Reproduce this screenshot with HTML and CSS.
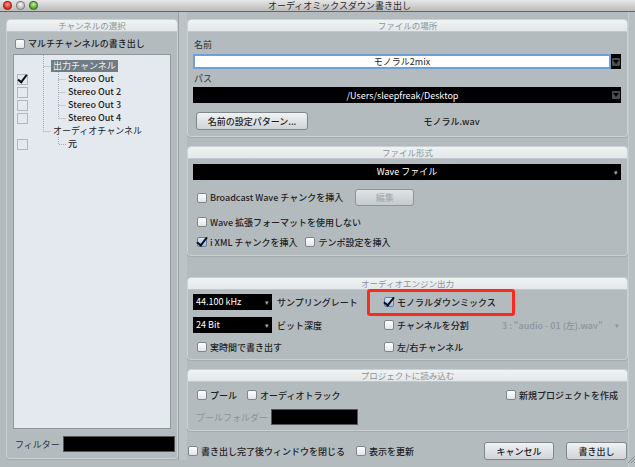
FILE: index.html
```html
<!DOCTYPE html>
<html lang="ja">
<head>
    <meta charset="UTF-8">
    <title>オーディオミックスダウン書き出し</title>
    <link rel="stylesheet" href="styles.css">
</head>
<body>
    <div class="titlebar">
        <div class="lights">
            <span class="light red"></span>
            <span class="light grey"></span>
            <span class="light green"></span>
        </div>
        <div class="title">オーディオミックスダウン書き出し</div>
    </div>

    <div class="window">
        <!-- Channel selection -->
        <div class="panel side">
            <div class="panel-head">チャンネルの選択</div>
            <label class="check-row multi"><span class="cb"></span>マルチチャンネルの書き出し</label>

            <div class="tree">
                <svg class="tree-lines" width="156" height="100" viewBox="0 0 156 100">
                    <g stroke="#a3abb0" stroke-width="1" stroke-dasharray="1 1" fill="none">
                        <path d="M29.5 0 V76.5 M29.5 11.5 H37 M29.5 76.5 H37"/>
                        <path d="M44.5 17 V63.5 M44.5 24.5 H52 M44.5 37.5 H52 M44.5 50.5 H52 M44.5 63.5 H52"/>
                        <path d="M44.5 82 V89.5 H52"/>
                    </g>
                </svg>
                <div class="tree-row"><span class="tcol"></span><span class="tlabel l0 selected">出力チャンネル</span></div>
                <div class="tree-row"><span class="tcol"><span class="tcb on"></span></span><span class="tlabel l1">Stereo Out</span></div>
                <div class="tree-row"><span class="tcol"><span class="tcb"></span></span><span class="tlabel l1">Stereo Out 2</span></div>
                <div class="tree-row"><span class="tcol"><span class="tcb"></span></span><span class="tlabel l1">Stereo Out 3</span></div>
                <div class="tree-row"><span class="tcol"><span class="tcb"></span></span><span class="tlabel l1">Stereo Out 4</span></div>
                <div class="tree-row"><span class="tcol"></span><span class="tlabel l0">オーディオチャンネル</span></div>
                <div class="tree-row"><span class="tcol"><span class="tcb"></span></span><span class="tlabel l1">元</span></div>
            </div>

            <div class="filter">
                <span class="filter-label">フィルター</span>
                <span class="black-box filter-box"></span>
            </div>
        </div>

        <div class="divider"></div>

        <div class="main">
            <!-- File location -->
            <div class="panel p-location">
                <div class="panel-head">ファイルの場所</div>
                <div class="panel-body">
                    <div class="field-label first">名前</div>
                    <div class="name-row">
                        <div class="name-input">モノラル2mix</div>
                        <div class="drop-btn"><span class="drop-knob"></span></div>
                    </div>
                    <div class="field-label">パス</div>
                    <div class="path-bar">
                        <span class="path-text">/Users/sleepfreak/Desktop</span>
                        <span class="drop-knob"></span>
                    </div>
                    <div class="pattern-row">
                        <button class="btn pattern-btn">名前の設定パターン...</button>
                        <span class="file-name">モノラル.wav</span>
                    </div>
                </div>
            </div>

            <!-- File format -->
            <div class="panel p-format">
                <div class="panel-head">ファイル形式</div>
                <div class="panel-body">
                    <div class="select wide">Wave ファイル<span class="arrow">▾</span></div>
                    <div class="row bwf-row">
                        <label class="check-row"><span class="cb"></span>Broadcast Wave チャンクを挿入</label>
                        <button class="btn edit-btn" disabled>編集</button>
                    </div>
                    <div class="row">
                        <label class="check-row"><span class="cb"></span>Wave 拡張フォーマットを使用しない</label>
                    </div>
                    <div class="row ixml-row">
                        <label class="check-row"><span class="cb checked"></span>i XML チャンクを挿入</label>
                        <label class="check-row tempo"><span class="cb"></span>テンポ設定を挿入</label>
                    </div>
                </div>
            </div>

            <!-- Audio engine output -->
            <div class="panel p-engine">
                <div class="panel-head">オーディオエンジン出力</div>
                <div class="panel-body engine-grid">
                    <div class="cell">
                        <div class="select small">44.100 kHz<span class="arrow">▾</span></div>
                        <span class="plain">サンプリングレート</span>
                    </div>
                    <div class="cell highlight-cell">
                        <span class="red-mark"></span>
                        <label class="check-row"><span class="cb checked"></span>モノラルダウンミックス</label>
                    </div>
                    <div class="cell"></div>

                    <div class="cell">
                        <div class="select small">24 Bit<span class="arrow">▾</span></div>
                        <span class="plain">ビット深度</span>
                    </div>
                    <div class="cell">
                        <label class="check-row"><span class="cb"></span>チャンネルを分割</label>
                    </div>
                    <div class="cell split-name">
                        <span>3 : "audio - 01 (左).wav"</span>
                        <span class="arrow grey">▾</span>
                    </div>

                    <div class="cell last">
                        <label class="check-row indent"><span class="cb"></span>実時間で書き出す</label>
                    </div>
                    <div class="cell last">
                        <label class="check-row"><span class="cb"></span>左/右チャンネル</label>
                    </div>
                    <div class="cell last"></div>
                </div>
            </div>

            <!-- Import into project -->
            <div class="panel p-import">
                <div class="panel-head">プロジェクトに読み込む</div>
                <div class="panel-body">
                    <div class="row import-row">
                        <label class="check-row indent"><span class="cb"></span>プール</label>
                        <label class="check-row track"><span class="cb"></span>オーディオトラック</label>
                        <label class="check-row new-project"><span class="cb"></span>新規プロジェクトを作成</label>
                    </div>
                    <div class="row folder-row">
                        <span class="muted">プールフォルダー</span>
                        <span class="black-box folder-box"></span>
                    </div>
                </div>
            </div>

            <div class="footer">
                <label class="check-row"><span class="cb"></span>書き出し完了後ウィンドウを閉じる</label>
                <label class="check-row refresh"><span class="cb"></span>表示を更新</label>
                <button class="btn cancel-btn">キャンセル</button>
                <button class="btn export-btn">書き出し</button>
            </div>
        </div>

        <div class="gutter">
            <svg class="grip" width="8" height="8" viewBox="0 0 8 8">
                <path d="M1 8 L8 1 M4 8 L8 4 M7 8 L8 7" stroke="#8a9296" stroke-width="1"/>
            </svg>
        </div>
    </div>
</body>
</html>
```

FILE: styles.css
```css
* {
    box-sizing: border-box;
}

body {
    margin: 0;
    width: 635px;
    height: 467px;
    overflow: hidden;
    background-color: #b4bbbe;
    font-family: "Noto Sans CJK JP", "Noto Sans", sans-serif;
    font-size: 9px;
    color: #1e2224;
}

/* Title bar */
.titlebar {
    height: 12px;
    position: relative;
    background: linear-gradient(#e6e6e6, #bcbcbc);
    border-bottom: 1px solid #666;
}

.lights {
    position: absolute;
    left: 3px;
    top: 1px;
    display: flex;
    gap: 4px;
}

.light {
    width: 9px;
    height: 9px;
    border-radius: 50%;
    border: 1px solid rgba(0, 0, 0, 0.35);
}

.light.red {
    background: radial-gradient(circle at 50% 35%, #ff9a8a, #d8281c 70%);
}

.light.grey {
    background: radial-gradient(circle at 50% 35%, #f4f4f4, #b8b8b8 70%);
}

.light.green {
    background: radial-gradient(circle at 50% 35%, #c8f09a, #4ea02a 70%);
}

.title {
    text-align: center;
    line-height: 11px;
    font-size: 9px;
    color: #2a2a2a;
    padding-left: 44px;
}

/* Layout */
.window {
    display: flex;
    height: 455px;
    padding: 7px 0 0 6px;
}

.panel {
    border: 1px solid #cbd1d4;
    border-radius: 4px;
    box-shadow: 0 1px 0 #a4abaf;
}

.panel-head {
    height: 12px;
    line-height: 11px;
    text-align: center;
    font-size: 8.5px;
    color: #8c9498;
    background: linear-gradient(#f0f3f4, #e3e7e9);
    border-bottom: 1px solid #c2c8cb;
    border-radius: 3px 3px 0 0;
}

.side {
    width: 172px;
    height: 440px;
    display: flex;
    flex-direction: column;
    padding: 0 0 6px 5px;
}

.side .panel-head {
    margin-left: -5px;
}

.divider {
    width: 9px;
    height: 448px;
    margin-top: -7px;
    border-left: 1px solid #9aa2a6;
    background-color: #bcc3c6;
}

.main {
    width: 441px;
    display: flex;
    flex-direction: column;
}

.gutter {
    flex: 1;
    margin-top: -7px;
    border-left: 1px solid #c4cacd;
    background-color: #b8bfc2;
    position: relative;
}

.grip {
    position: absolute;
    right: 0;
    bottom: 4px;
}

.panel-body {
    padding: 0 6px 0 5px;
}

/* Checkboxes */
.check-row {
    display: flex;
    align-items: center;
    gap: 3px;
    height: 14px;
    font-weight: 500;
    white-space: nowrap;
}

.cb {
    width: 10px;
    height: 10px;
    flex: none;
    border: 1px solid #7f878c;
    border-radius: 2px;
    background: linear-gradient(#ffffff, #e2e4e6);
    position: relative;
}

.cb.checked {
    background: linear-gradient(#d8e6f6, #9fbde3);
    border-color: #5e7fa8;
}

.cb.checked::after {
    content: "";
    position: absolute;
    left: 1px;
    top: -3px;
    width: 4px;
    height: 9px;
    border-right: 2px solid #111;
    border-bottom: 2px solid #111;
    transform: rotate(38deg);
}

.multi {
    margin: 5px 0 0 3px;
}

/* Channel tree */
.tree {
    position: relative;
    width: 158px;
    height: 377px;
    margin-top: 3px;
    margin-left: 1px;
    padding-top: 5px;
    background-color: #e3e9ee;
    border: 1px solid #8e969a;
}

.tree-lines {
    position: absolute;
    left: 0;
    top: 0;
}

.tree-row {
    display: flex;
    height: 13px;
    align-items: center;
    position: relative;
}

.tcol {
    width: 29px;
    height: 13px;
    padding: 1px 0 0 3px;
}

.tcb {
    display: block;
    width: 11px;
    height: 11px;
    border: 1px solid #b0b8bd;
    position: relative;
}

.tcb.on::after {
    content: "";
    position: absolute;
    left: 2px;
    top: -2px;
    width: 3px;
    height: 8px;
    border-right: 2px solid #111;
    border-bottom: 2px solid #111;
    transform: rotate(38deg);
}

.tlabel {
    line-height: 12px;
    white-space: nowrap;
    color: #1e2224;
}

.tlabel.l0 {
    margin-left: 8px;
    padding: 0 2px;
}

.tlabel.l1 {
    margin-left: 25px;
    font-weight: 500;
}

.tlabel.selected {
    background-color: #6f7c84;
    color: #eef1f3;
}

.filter {
    display: flex;
    align-items: center;
    margin-top: 7px;
    gap: 3px;
}

.filter-label {
    padding-left: 3px;
    color: #2c3133;
}

.black-box {
    display: block;
    height: 16px;
    background-color: #000;
    border: 1px solid #555;
}

.filter-box {
    width: 112px;
}

/* File location */
.p-location {
    height: 118px;
}

.field-label {
    height: 12px;
    line-height: 12px;
    margin-top: 4px;
    padding-left: 1px;
    color: #2c3133;
}

.field-label.first {
    margin-top: 7px;
}

.name-row {
    display: flex;
    margin-top: 3px;
    height: 15px;
}

.name-input {
    flex: 1;
    background-color: #fff;
    border: 2px solid #6f9fd8;
    text-align: center;
    line-height: 11px;
}

.drop-btn {
    width: 10px;
    background-color: #000;
    display: flex;
    align-items: center;
    justify-content: center;
}

.drop-knob {
    width: 8px;
    height: 8px;
    background-color: #4a4d50;
    border-radius: 1px;
    position: relative;
}

.drop-knob::after {
    content: "";
    position: absolute;
    left: 1px;
    top: 2px;
    border-left: 3px solid transparent;
    border-right: 3px solid transparent;
    border-top: 4px solid #000;
}

.path-bar {
    margin-top: 2px;
    height: 16px;
    background-color: #000;
    color: #fff;
    display: flex;
    align-items: center;
    padding-right: 1px;
}

.path-text {
    flex: 1;
    text-align: center;
}

.pattern-row {
    display: flex;
    align-items: center;
    margin-top: 9px;
    padding-left: 3px;
}

.btn {
    font-family: inherit;
    font-size: 9px;
    font-weight: 500;
    color: #1e2224;
    height: 18px;
    padding: 0;
    border: 1px solid #80888c;
    border-radius: 3px;
    background: linear-gradient(#f0f2f3, #cfd4d7);
}

.pattern-btn {
    width: 112px;
}

.file-name {
    flex: 1;
    text-align: center;
    font-weight: 500;
    padding-right: 26px;
}

/* File format */
.p-format {
    height: 110px;
    margin-top: 9px;
}

.select {
    height: 16px;
    background-color: #000;
    color: #fff;
    line-height: 16px;
    position: relative;
}

.select .arrow {
    position: absolute;
    right: 3px;
    top: 0;
    font-size: 7px;
    color: #aaa;
}

.select.wide {
    margin-top: 5px;
    text-align: center;
}

.row {
    display: flex;
    align-items: center;
    padding-left: 4px;
    height: 14px;
    margin-top: 9px;
}

.bwf-row {
    height: 17px;
}

.edit-btn {
    width: 59px;
    height: 17px;
    margin-left: 12px;
    color: #a6acb0;
    background: linear-gradient(#dfe3e5, #c4cacd);
    border-color: #8d9599;
}

.ixml-row {
    margin-top: 6px;
}

.tempo {
    margin-left: 8px;
}

/* Audio engine */
.p-engine {
    height: 83px;
    margin-top: 21px;
}

.engine-grid {
    display: grid;
    grid-template-columns: 191px 118px 1fr;
    grid-auto-rows: 16px;
    row-gap: 7px;
    padding-top: 4px;
}

.cell {
    display: flex;
    align-items: center;
    position: relative;
}

.cell.last {
    height: 14px;
}

.select.small {
    width: 79px;
    padding-left: 3px;
}

.plain {
    margin-left: 5px;
    font-weight: 500;
}

.red-mark {
    position: absolute;
    left: -17px;
    top: -5px;
    width: 148px;
    height: 27px;
    border: 3px solid #fb2a1e;
    border-radius: 3px;
}

.split-name {
    color: #8c9498;
    font-weight: 500;
    justify-content: space-between;
    padding-right: 2px;
}

.arrow.grey {
    font-size: 7px;
    color: #8c9498;
}

.indent {
    margin-left: 4px;
}

/* Import */
.p-import {
    height: 62px;
    margin-top: 9px;
}

.import-row {
    margin-top: 6px;
    padding-right: 3px;
}

.import-row .indent {
    margin-left: 0;
}

.track {
    margin-left: 10px;
}

.new-project {
    margin-left: auto;
}

.folder-row {
    height: 16px;
    margin-top: 7px;
    padding-left: 3px;
}

.muted {
    color: #8a9296;
}

.folder-box {
    width: 87px;
    margin-left: 3px;
}

/* Footer */
.footer {
    display: flex;
    align-items: center;
    height: 18px;
    margin-top: 11px;
    padding-left: 1px;
}

.refresh {
    margin-left: 11px;
}

.cancel-btn {
    width: 70px;
    margin-left: auto;
}

.export-btn {
    width: 61px;
    margin-left: 12px;
    margin-right: 1px;
}
```
